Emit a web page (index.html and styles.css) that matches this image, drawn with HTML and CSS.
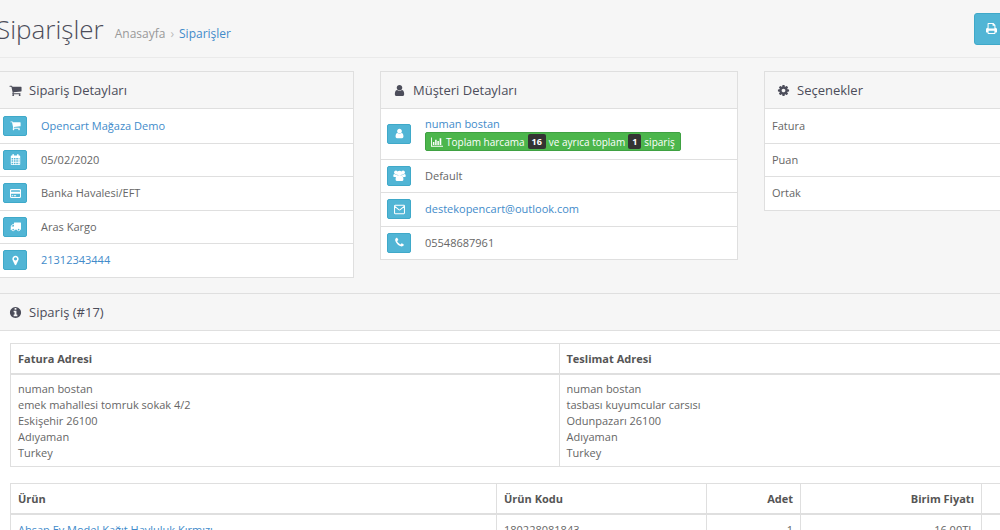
FILE: index.html
```html
<!DOCTYPE html>
<html lang="tr">
<head>
<meta charset="utf-8">
<title>Siparişler</title>
<link rel="stylesheet" href="styles.css">
</head>
<body>
<svg class="sprite" aria-hidden="true">
  <symbol id="cart" viewBox="0 0 1792 1792"><path d="M704 1536q0 52-38 90t-90 38-90-38-38-90 38-90 90-38 90 38 38 90zm896 0q0 52-38 90t-90 38-90-38-38-90 38-90 90-38 90 38 38 90zm128-1088v512q0 24-16.500 42.500t-40.500 21.500l-1044 122q13 60 13 70 0 16-24 64h920q26 0 45 19t19 45-19 45-45 19h-1024q-26 0-45-19t-19-45q0-11 8-31.500t16-36 21.500-40 15.500-29.500l-177-823h-204q-26 0-45-19t-19-45 19-45 45-19h256q16 0 28.500 6.500t19.500 15.500 13 24.500 8 26 5.500 29.500 4.500 26h1201q26 0 45 19t19 45z"/></symbol>
  <symbol id="user" viewBox="0 0 1792 1792"><path d="M1536 1399q0 109-62.500 187t-150.500 78h-854q-88 0-150.500-78t-62.500-187q0-85 8.500-160.500t31.500-152 58.500-131 94-89 134.500-34.500q131 128 313 128t313-128q76 0 134.500 34.500t94 89 58.500 131 31.500 152 8.500 160.500zm-256-887q0 159-112.500 271.500t-271.500 112.500-271.500-112.500-112.500-271.500 112.500-271.500 271.500-112.500 271.500 112.500 112.500 271.500z"/></symbol>
  <symbol id="cog" viewBox="0 0 1792 1792"><path d="M1152 896q0-106-75-181t-181-75-181 75-75 181 75 181 181 75 181-75 75-181zm512-109v222q0 12-8 23t-20 13l-185 28q-19 54-39 91 35 50 107 138 10 12 10 25t-9 23q-27 37-99 108t-94 71q-12 0-26-9l-138-108q-44 23-91 38-16 136-29 186-7 28-36 28h-222q-14 0-24.500-8.500t-11.500-21.500l-28-184q-49-16-90-37l-141 107q-10 9-25 9-14 0-25-11-126-114-165-168-7-10-7-23 0-12 8-23 15-21 51-66.500t54-70.500q-27-50-41-99l-183-27q-13-2-21-12.500t-8-23.500v-222q0-12 8-23t19-13l186-28q14-46 39-92-40-57-107-138-10-12-10-24 0-10 9-23 26-36 98.500-107.500t94.500-71.500q13 0 26 10l138 107q44-23 91-38 16-136 29-186 7-28 36-28h222q14 0 24.500 8.500t11.500 21.500l28 184q49 16 90 37l142-107q9-9 24-9 13 0 25 10 129 119 165 170 7 8 7 22 0 12-8 23-15 21-51 66.500t-54 70.500q26 50 41 98l183 28q13 2 21 12.500t8 23.500z"/></symbol>
  <symbol id="info" viewBox="0 0 1792 1792"><path d="M1152 1376v-160q0-14-9-23t-23-9h-96v-512q0-14-9-23t-23-9h-320q-14 0-23 9t-9 23v160q0 14 9 23t23 9h96v320h-96q-14 0-23 9t-9 23v160q0 14 9 23t23 9h448q14 0 23-9t9-23zm-128-896v-160q0-14-9-23t-23-9h-192q-14 0-23 9t-9 23v160q0 14 9 23t23 9h192q14 0 23-9t9-23zm640 416q0 209-103 385.500t-279.500 279.500-385.500 103-385.500-103-279.500-279.500-103-385.500 103-385.500 279.500-279.500 385.500-103 385.500 103 279.500 279.500 103 385.500z"/></symbol>
  <symbol id="pin" viewBox="0 0 1792 1792"><path d="M1152 640q0-106-75-181t-181-75-181 75-75 181 75 181 181 75 181-75 75-181zm256 0q0 109-33 179l-364 774q-16 33-47.500 52t-67.500 19-67.500-19-46.500-52l-365-774q-33-70-33-179 0-212 150-362t362-150 362 150 150 362z"/></symbol>
  <symbol id="phone" viewBox="0 0 1792 1792"><path d="M1600 1240q0 27-10 70.500t-21 68.500q-21 50-122 106-94 51-186 51-27 0-53-3.500t-57.500-12.500-47-14.500-55.500-20.500-49-18q-98-35-175-83-127-79-264-216t-216-264q-48-77-83-175-3-9-18-49t-20.500-55.500-14.500-47-12.500-57.500-3.500-53q0-92 51-186 56-101 106-122 25-11 68.500-21t70.500-10q14 0 21 3 18 6 53 76 11 19 30 54t35 63.500 31 53.500q3 4 17.500 25t21.500 35.500 7 28.500q0 20-28.500 50t-62 55-62 53-28.500 46q0 9 5 22.500t8.500 20.500 14 24 11.500 19q76 137 174 235t235 174q2 1 19 11.500t24 14 20.500 8.500 22.500 5q18 0 46-28.500t53-62 55-62 50-28.500q14 0 28.500 7t35.500 21.500 25 17.500q25 15 53.500 31t63.500 35 54 30q70 35 76 53 3 7 3 21z"/></symbol>
  <symbol id="truck" viewBox="0 0 1792 1792"><path d="M640 1408q0-52-38-90t-90-38-90 38-38 90 38 90 90 38 90-38 38-90zm-384-512h384v-256h-158q-13 0-22 9l-195 195q-9 9-9 22v30zm1280 512q0-52-38-90t-90-38-90 38-38 90 38 90 90 38 90-38 38-90zm256-1088v1024q0 15-4 26.500t-13.500 18.500-16.500 11.500-23.500 6-22.500 2-25.500 0-22.500-.5q0 106-75 181t-181 75-181-75-75-181h-384q0 106-75 181t-181 75-181-75-75-181h-64q-3 0-22.500.5t-25.500 0-22.500-2-23.500-6-16.500-11.500-13.500-18.500-4-26.500q0-26 19-45t45-19v-320q0-8-.5-35t0-38 2.500-34.500 6.500-37 14-30.500 22.500-30l198-198q19-19 50.500-32t58.500-13h160v-192q0-26 19-45t45-19h1024q26 0 45 19t19 45z"/></symbol>
  <symbol id="calendar" viewBox="0 0 14 14"><path fill-rule="evenodd" d="M2 2h1V1q0-1 1-1t1 1v1h4V1q0-1 1-1t1 1v1h1q1 0 1 1v10q0 1-1 1H2q-1 0-1-1V3q0-1 1-1zM2 5v2h2V5zm3 0v2h2V5zm3 0v2h2V5zm3 0v2h1V5zM2 8v2h2V8zm3 0v2h2V8zm3 0v2h2V8zm3 0v2h1V8zM2 11v2h2v-2zm3 0v2h2v-2zm3 0v2h2v-2zm3 0v2h1v-2z"/></symbol>
  <symbol id="card" viewBox="0 0 15 14"><path fill-rule="evenodd" d="M1.500 1h12Q15 1 15 2.500v9q0 1.500-1.500 1.500h-12Q0 13 0 11.500v-9Q0 1 1.500 1zM1.300 3.500v1.200h12.400V3.500q0-1-1-1H2.300q-1 0-1 1zm0 3.700v3.500q0 1 1 1h10.400q1 0 1-1V7.200zm1 2.300h2v1.200h-2zm3 0h3v1.200h-3z"/></symbol>
  <symbol id="users" viewBox="0 0 16 14"><circle cx="3.500" cy="3" r="2.400"/><circle cx="12.500" cy="3" r="2.400"/><circle cx="8" cy="4.300" r="3.200"/><path d="M0 8q0-3 1.700-3 1.500 1 3 .5Q5 7 5.600 7.300 4 8 3.500 9H1.600Q0 9 0 8zm16 0q0-3-1.700-3-1.500 1-3 .5-.3 1.500-.9 1.800Q12 8 12.500 9h1.900Q16 9 16 8zM3 12q0-5 2.800-5Q8 8.500 10.200 7 13 7 13 12q0 2-2 2H5q-2 0-2-2z"/></symbol>
  <symbol id="mail" viewBox="0 0 14 12"><path d="M1.500.7h11q.8 0 .8.800v9q0 .8-.8.800h-11q-.8 0-.8-.8v-9q0-.8.800-.8zM1 2l5 4.200q1 .8 2 0L13 2" fill="none" stroke="currentColor" stroke-width="1.300"/></symbol>
  <symbol id="chart" viewBox="0 0 16 14"><path d="M0 1h1.200v11H16v1.200H0zM2.500 7h2v4h-2zm3-3h2v7h-2zm3 1.500h2V11h-2zm3-3.500h2.200v9h-2.200z"/></symbol>
  <symbol id="print" viewBox="0 0 14 14"><path fill-rule="evenodd" d="M2 1q0-1 1-1h6.500L12 2.500V6q2 0 2 2v3.500q0 .5-.5.5H12v1q0 1-1 1H3q-1 0-1-1v-1H.5q-.5 0-.5-.5V8q0-2 2-2zm1.300.3V7h7.400V3.500H9q-.7 0-.7-.7V1.300zm0 8.700v2.700h7.400V10z"/></symbol>
</svg>
<div class="page">
  <header class="page-header">
    <h1>Siparişler</h1>
    <nav class="breadcrumb" aria-label="Sayfa yolu"><a class="muted" href="#">Anasayfa</a><span class="sep">›</span><a href="#">Siparişler</a></nav>
    <button class="print-button" type="button" aria-label="Yazdır"><svg><use href="#print"/></svg></button>
  </header>
  <main>
    <div class="cards">
      <section class="panel">
        <h2><svg><use href="#cart"/></svg>Sipariş Detayları</h2>
        <table class="details">
          <tr><td class="key"><button type="button" aria-label="Mağaza"><svg><use href="#cart"/></svg></button></td><td><a href="#">Opencart Mağaza Demo</a></td></tr>
          <tr><td class="key"><button type="button" aria-label="Tarih"><svg><use href="#calendar"/></svg></button></td><td>05/02/2020</td></tr>
          <tr><td class="key"><button type="button" aria-label="Ödeme"><svg><use href="#card"/></svg></button></td><td>Banka Havalesi/EFT</td></tr>
          <tr><td class="key"><button type="button" aria-label="Kargo"><svg><use href="#truck"/></svg></button></td><td>Aras Kargo</td></tr>
          <tr><td class="key"><button type="button" aria-label="Takip"><svg><use href="#pin"/></svg></button></td><td><a href="#">21312343444</a></td></tr>
        </table>
      </section>
      <section class="panel">
        <h2><svg><use href="#user"/></svg>Müşteri Detayları</h2>
        <table class="details">
          <tr class="customer"><td class="key"><button type="button" aria-label="Müşteri"><svg><use href="#user"/></svg></button></td><td><a href="#">numan bostan</a><div class="summary"><svg><use href="#chart"/></svg>Toplam harcama <b>16</b> ve ayrıca toplam <b>1</b> sipariş</div></td></tr>
          <tr><td class="key"><button type="button" aria-label="Müşteri grubu"><svg class="wide"><use href="#users"/></svg></button></td><td>Default</td></tr>
          <tr><td class="key"><button type="button" aria-label="E-posta"><svg><use href="#mail"/></svg></button></td><td><a href="#">destekopencart@outlook.com</a></td></tr>
          <tr><td class="key"><button type="button" aria-label="Telefon"><svg><use href="#phone"/></svg></button></td><td>05548687961</td></tr>
        </table>
      </section>
      <section class="panel">
        <h2><svg><use href="#cog"/></svg>Seçenekler</h2>
        <table class="details">
          <tr><td>Fatura</td></tr>
          <tr><td>Puan</td></tr>
          <tr><td>Ortak</td></tr>
        </table>
      </section>
    </div>
    <section class="panel order">
      <h2><svg><use href="#info"/></svg>Sipariş (#17)</h2>
      <div class="order-body">
        <table class="grid addresses">
          <thead><tr><th>Fatura Adresi</th><th>Teslimat Adresi</th></tr></thead>
          <tbody><tr>
            <td>numan bostan<br>emek mahallesi tomruk sokak 4/2<br>Eskişehir 26100<br>Adıyaman<br>Turkey</td>
            <td>numan bostan<br>tasbası kuyumcular carsısı<br>Odunpazarı 26100<br>Adıyaman<br>Turkey</td>
          </tr></tbody>
        </table>
        <table class="grid products">
          <colgroup><col class="name"><col class="code"><col class="count"><col class="price"><col></colgroup>
          <thead><tr><th>Ürün</th><th>Ürün Kodu</th><th class="num">Adet</th><th class="num">Birim Fiyatı</th><th></th></tr></thead>
          <tbody><tr><td><a href="#">Ahşap Ev Model Kağıt Havluluk Kırmızı</a></td><td>180228081843</td><td class="num">1</td><td class="num">16,00TL</td><td></td></tr></tbody>
        </table>
      </div>
    </section>
  </main>
</div>
</body>
</html>
```
FILE: styles.css
```css
* { box-sizing: border-box; }
html { height: 100%; overflow: hidden; }
body {
  height: 100%;
  margin: 0;
  overflow: hidden;
  background: #f6f6f6;
  color: #666;
  font: 11px/16px "Open Sans", sans-serif;
}
a { color: #428bca; text-decoration: none; }
svg { fill: currentColor; flex: none; }
.sprite { position: absolute; width: 0; height: 0; }

/* The page runs past both sides of the window. */
.page { margin: 0 -122px 0 -4px; }

.page-header {
  display: flex;
  align-items: center;
  height: 58px;
  border-bottom: 1px solid #eaeaea;
}
h1 {
  margin: 0;
  color: #4c4d5a;
  font-size: 26px;
  line-height: 56px;
  font-weight: 300;
}
.breadcrumb { display: flex; margin: 10px auto 0 11px; font-size: 12px; }
.breadcrumb .muted { color: #999; }
.sep { padding: 0 5px; color: #bbb; }
.print-button {
  width: 38px;
  height: 32px;
  margin-right: 110px;
  padding: 0;
  border: 1px solid #3fa9c9;
  border-radius: 3px;
  background: #51b5d5;
  color: #fff;
}
.print-button svg { display: block; width: 11px; height: 11px; margin: 0 11px; }

.cards {
  display: grid;
  grid-template-columns: repeat(3, 1fr);
  align-items: start;
  gap: 26px;
  padding: 13px 0 15px;
}
.panel { border: 1px solid #dfdfdf; background: #fff; }
.panel h2 {
  display: flex;
  align-items: center;
  gap: 7px;
  height: 37px;
  margin: 0;
  padding: 0 12px;
  border-bottom: 1px solid #dfdfdf;
  background: #f6f6f6;
  color: #4c4d5a;
  font-size: 13px;
  font-weight: 400;
}
.panel h2 svg { width: 13px; height: 13px; }

table { width: 100%; border-spacing: 0; border-collapse: collapse; }
.details td { height: 34px; padding: 0 7px; }
.details tr:nth-child(even) td { height: 33px; }
.details .customer td { height: 50px; }
.details tr + tr td { border-top: 1px solid #dfdfdf; }
.details .key { width: 37px; padding: 0 6px; }
.key button {
  display: flex;
  align-items: center;
  justify-content: center;
  width: 24px;
  height: 20px;
  padding: 0;
  border: 1px solid #3fa9c9;
  border-radius: 2px;
  background: #51b5d5;
  color: #fff;
}
.key svg { width: 11px; height: 11px; }
.key .wide { width: 13px; }
.customer a { display: block; }
.summary {
  display: flex;
  align-items: center;
  gap: 3px;
  width: max-content;
  height: 19px;
  padding: 0 5px;
  border: 1px solid #3fa142;
  border-radius: 2px;
  background: #4cb64c;
  color: #fff;
  font-size: 10px;
}
.summary svg { width: 12px; height: 12px; }
.summary b {
  padding: 0 4px;
  border-radius: 2px;
  background: #333;
  font-size: 9px;
  line-height: 15px;
}

.order-body { padding: 12px 13px 0; }
.grid { margin-bottom: 16px; table-layout: fixed; border: 1px solid #dfdfdf; }
.grid th,
.grid td { padding: 7px; border: 1px solid #dfdfdf; text-align: left; vertical-align: top; }
.grid th { padding-bottom: 6px; border-bottom-width: 2px; color: #555; font-weight: 700; }
.grid .num { text-align: right; }
.addresses td { padding: 6px 7px 5px; }
.name { width: 486px; }
.code { width: 210px; }
.count { width: 94px; }
.price { width: 181px; }
```
